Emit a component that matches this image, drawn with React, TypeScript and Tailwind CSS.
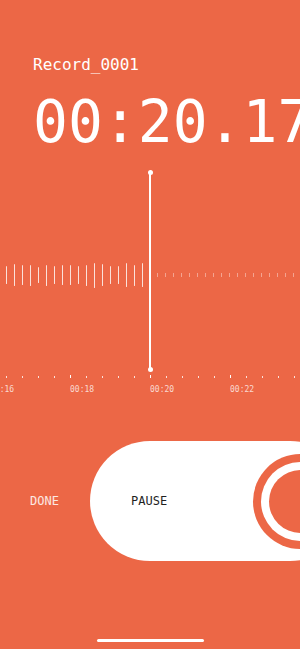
const played = [18, 22, 20, 21, 16, 21, 18, 20, 20, 18, 21, 25, 22, 18, 18, 24, 21, 24]
const upcoming = Array.from({ length: 18 })
const ticks = Array.from({ length: 19 }, (_, i) => i)
const labels = ['00:16', '00:18', '00:20', '00:22']

const mono = { fontFamily: '"DejaVu Sans Mono", "Liberation Mono", monospace' }

export default function App() {
  return (
    <div
      className="w-[300px] h-[649px] bg-[#ec6746] text-white overflow-hidden flex flex-col"
      style={mono}
    >
      <p className="pt-[55px] pl-[33px] text-[16px] leading-[20px] whitespace-nowrap">Record_0001</p>
      <p className="mt-[18px] pl-[33px] text-[58px] leading-[58px] whitespace-nowrap">00:20.17</p>

      <div className="relative mt-[21px]">
        {/* waveform */}
        <div className="mt-[89px] h-[28px] flex items-center">
          <div className="ml-[6px] flex items-center gap-[7px]">
            {played.map((h, i) => (
              <span key={i} className="w-px bg-white/80 rounded-full" style={{ height: h }} />
            ))}
          </div>
          <div className="ml-[14px] flex items-center gap-[7px]">
            {upcoming.map((_, i) => (
              <span key={i} className="w-px h-[4px] bg-white/40" />
            ))}
          </div>
        </div>

        {/* time ruler */}
        <div className="mt-[86px] h-[3px] flex items-center ml-[6px] gap-[15px]">
          {ticks.map((i) =>
            i % 5 === 4 ? (
              <span key={i} className="w-px h-[3px] bg-white" />
            ) : (
              <span key={i} className="w-px h-[2px] bg-white/80" />
            )
          )}
        </div>
        <div className="mt-[7px] ml-[-10px] flex text-[8px] leading-[10px] text-white/75">
          {labels.map((l) => (
            <span key={l} className="w-[80px] shrink-0">{l}</span>
          ))}
        </div>

        {/* playhead */}
        <div className="absolute left-[149px] top-0 w-[2px] h-[198px] bg-white" />
        <div className="absolute left-[147.5px] top-[-2.5px] w-[5px] h-[5px] rounded-full bg-white" />
        <div className="absolute left-[147.5px] top-[195px] w-[5px] h-[5px] rounded-full bg-white" />
      </div>

      <div className="mt-[46px] h-[120px] flex items-center">
        <span className="w-[90px] shrink-0 pl-[30px] text-[12px] text-white/85">DONE</span>
        <div className="w-[260px] h-[120px] shrink-0 rounded-full bg-white flex items-center pl-[41px]">
          <span className="w-[36px] text-[12px] text-[#1f1f1f]">PAUSE</span>
          <div className="ml-[86px] w-[95px] h-[95px] shrink-0 rounded-full bg-[#ec6746] flex items-center justify-center">
            <div className="w-[79px] h-[79px] rounded-full bg-white flex items-center justify-center">
              <div className="w-[63px] h-[63px] rounded-full bg-[#ec6746]" />
            </div>
          </div>
        </div>
      </div>

      <div className="mt-[78px] mx-auto w-[107px] h-[3px] rounded-full bg-white" />
    </div>
  )
}
